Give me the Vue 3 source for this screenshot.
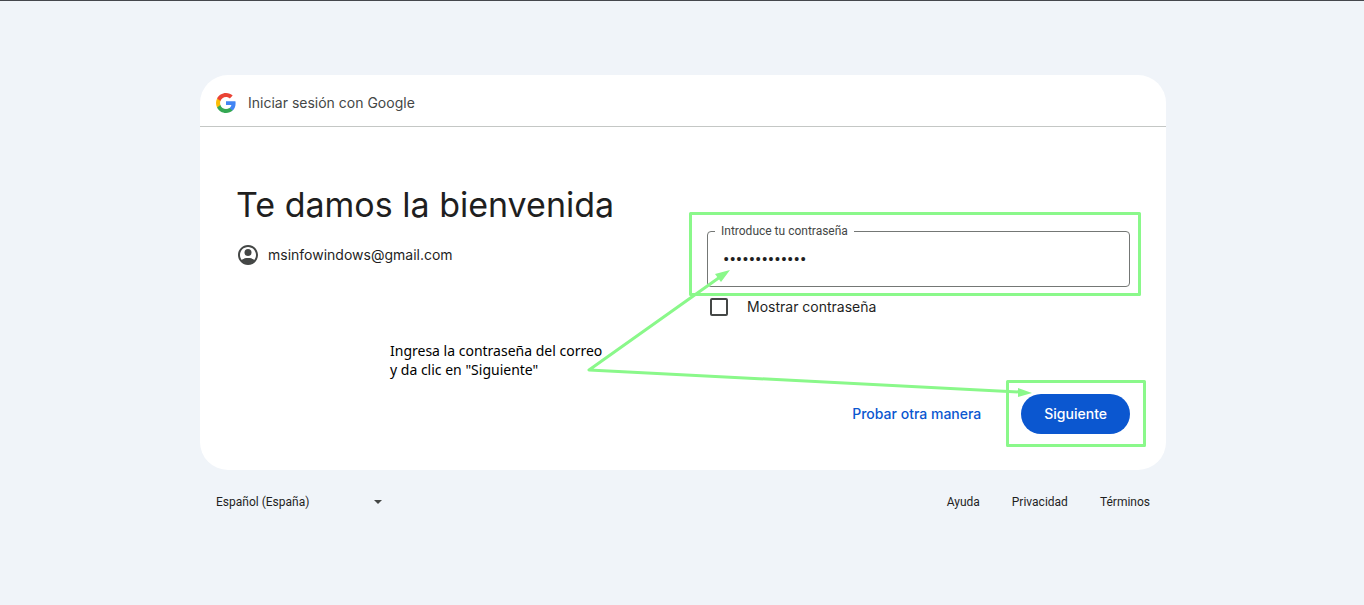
<script setup>
import { ref } from 'vue'

const password = ref('contrasena123')
const showPassword = ref(false)
const language = ref('es')
const links = ['Ayuda', 'Privacidad', 'Términos']
</script>

<template>
  <div class="page">
    <div class="shell">
      <main class="card">
        <header class="brand">
          <svg class="brand-logo" viewBox="2 2 44 44" aria-hidden="true">
            <path fill="#4285F4" d="M45.12 24.5c0-1.56-.14-3.06-.4-4.5H24v8.51h11.84c-.51 2.75-2.06 5.08-4.39 6.64v5.52h7.11c4.16-3.83 6.56-9.47 6.56-16.17z" />
            <path fill="#34A853" d="M24 46c5.94 0 10.92-1.97 14.56-5.33l-7.11-5.52c-1.97 1.32-4.49 2.1-7.45 2.1-5.73 0-10.58-3.87-12.31-9.07H4.34v5.7C7.96 41.07 15.4 46 24 46z" />
            <path fill="#FBBC05" d="M11.69 28.18C11.25 26.86 11 25.45 11 24s.25-2.86.69-4.18v-5.7H4.34C2.85 17.09 2 20.45 2 24s.85 6.91 2.34 9.88l7.35-5.7z" />
            <path fill="#EA4335" d="M24 10.75c3.23 0 6.13 1.11 8.41 3.29l6.31-6.31C34.91 4.18 29.93 2 24 2 15.4 2 7.96 6.93 4.34 14.12l7.35 5.7c1.73-5.2 6.58-9.07 12.31-9.07z" />
          </svg>
          <span>Iniciar sesión con Google</span>
        </header>

        <form class="content" @submit.prevent>
          <section class="welcome">
            <h1>Te damos la bienvenida</h1>
            <div class="account">
              <svg viewBox="0 0 24 24" aria-hidden="true">
                <path d="M12 2C6.48 2 2 6.48 2 12s4.48 10 10 10 10-4.48 10-10S17.52 2 12 2zM7.35 18.5C8.66 17.56 10.26 17 12 17s3.34.56 4.65 1.5C15.34 19.44 13.74 20 12 20s-3.34-.56-4.65-1.5zm10.79-1.38C16.45 15.8 14.32 15 12 15s-4.45.8-6.14 2.12C4.7 15.73 4 13.95 4 12c0-4.42 3.58-8 8-8s8 3.58 8 8c0 1.95-.7 3.73-1.86 5.12z" />
                <circle cx="12" cy="9.5" r="3.5" />
                <path d="M6 17C8 15.500 10 15 12 15s4 .5 6 2l-1 2c-3 2-7 2-10 0z" />
              </svg>
              <span>msinfowindows@gmail.com</span>
            </div>
          </section>

          <section class="fields">
            <div class="field">
              <label for="password">Introduce tu contraseña</label>
              <input id="password" v-model="password" :type="showPassword ? 'text' : 'password'" />
            </div>
            <div class="show">
              <input id="show" v-model="showPassword" type="checkbox" />
              <label for="show">Mostrar contraseña</label>
            </div>
            <div class="actions">
              <button class="secondary" type="button">Probar otra manera</button>
              <button class="primary" type="submit">Siguiente</button>
            </div>
          </section>
        </form>

        <p class="note">Ingresa la contraseña del correo<br />y da clic en "Siguiente"</p>
        <svg class="marks" width="966" height="395" viewBox="0 0 966 395" aria-hidden="true">
          <g fill="none" stroke="#8af88a" stroke-width="3" stroke-linejoin="round" stroke-linecap="round">
            <rect x="490.5" y="138.5" width="449" height="81" />
            <rect x="807.5" y="306.5" width="137" height="64" />
            <path d="M520 202L389 295L820 317" />
          </g>
          <path fill="#8af88a" d="M530 195L521 207L515 199zM832 318L818 322L818 313z" />
        </svg>
      </main>

      <footer class="footer">
        <div class="language">
          <select v-model="language" aria-label="Idioma">
            <option value="es">Español (España)</option>
          </select>
          <svg viewBox="0 0 8 4" aria-hidden="true"><path d="M0 0h8L4 4z" /></svg>
        </div>
        <nav>
          <a v-for="link in links" :key="link" href="#">{{ link }}</a>
        </nav>
      </footer>
    </div>
  </div>
</template>

<style>
body {
  background: #f0f4f9;
}
</style>

<style scoped>
.page {
  box-sizing: border-box;
  min-height: 100vh;
  border-top: 1px solid #45474d;
  padding: 74px 24px 24px 26px;
  background: #f0f4f9;
  color: #1f1f1f;
  font: 14px/20px Inter, "Open Sans", sans-serif;
}
.shell {
  max-width: 966px;
  margin: 0 auto;
}
.card {
  position: relative;
  border-radius: 28px;
  background: #fff;
}
.brand {
  display: flex;
  align-items: center;
  gap: 12px;
  padding: 16px 16px 12px;
  border-bottom: 1px solid #c4c7c5;
  color: #444746;
  line-height: 23px;
}
.brand-logo {
  width: 20px;
  height: 20px;
}
.content {
  display: grid;
  grid-template-columns: 1fr 1fr;
  gap: 48px;
  padding: 56px 36px 36px;
}
h1 {
  margin: 0;
  font-size: 34px;
  font-weight: 400;
  line-height: 44px;
  white-space: nowrap;
}
.account {
  display: flex;
  align-items: center;
  gap: 8px;
  margin-top: 16px;
  line-height: 24px;
}
.account svg {
  width: 24px;
  height: 24px;
  fill: #444746;
}
.fields {
  padding-top: 48px;
}
.field {
  position: relative;
}
.field label {
  position: absolute;
  left: 8px;
  top: -8px;
  padding: 0 6px;
  background: #fff;
  color: #444746;
  font: 12px/16px Roboto, sans-serif;
}
.field input {
  display: block;
  box-sizing: border-box;
  width: 100%;
  height: 56px;
  border: 1px solid #747775;
  border-radius: 4px;
  padding: 0 15px;
  outline: none;
  background: #fff;
  color: #1f1f1f;
  font: 19px/24px Roboto, sans-serif;
}
.show {
  display: flex;
  align-items: center;
  gap: 19px;
  margin-top: 10px;
  padding-left: 3px;
}
.show input {
  appearance: none;
  width: 18px;
  height: 18px;
  margin: 0;
  border: 2px solid #444746;
  border-radius: 2px;
}
.show input:checked {
  background: #0b57d0;
}
.actions {
  display: flex;
  justify-content: flex-end;
  gap: 24px;
  margin-top: 77px;
}
button {
  height: 40px;
  border: 0;
  border-radius: 20px;
  font: 500 14px/20px Inter, "Open Sans", sans-serif;
}
.secondary {
  padding: 0 16px;
  background: transparent;
  color: #0b57d0;
}
.primary {
  padding: 0 23px;
  background: #0b57d0;
  color: #fff;
}
.note {
  position: absolute;
  left: 190px;
  top: 266px;
  margin: 0;
  color: #000;
  font: 14px/19px "Noto Sans", sans-serif;
}
.marks {
  position: absolute;
  left: 0;
  top: 0;
  pointer-events: none;
}
.footer {
  display: flex;
  align-items: center;
  justify-content: space-between;
  padding: 24px 16px;
  font: 12px/16px Roboto, sans-serif;
}
.language {
  display: grid;
  align-items: center;
  width: 166px;
}
.language select {
  grid-area: 1 / 1;
  appearance: none;
  border: 0;
  padding: 0;
  background: transparent;
  color: #1f1f1f;
  font: inherit;
}
.language svg {
  grid-area: 1 / 1;
  justify-self: end;
  width: 8px;
  height: 4px;
  fill: #444746;
  pointer-events: none;
}
nav {
  display: flex;
  gap: 32px;
}
nav a {
  color: #1f1f1f;
  text-decoration: none;
}
</style>
